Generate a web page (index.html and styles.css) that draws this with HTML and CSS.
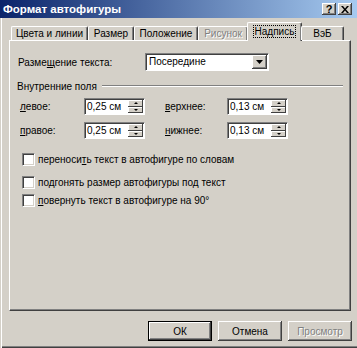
FILE: index.html
```html
<!DOCTYPE html>
<html>
<head>
    <meta charset="UTF-8">
    <title>Формат автофигуры</title>
    <link rel="stylesheet" href="styles.css">
</head>
<body>
    <div class="window">
        <div class="titlebar">
            <span class="title">Формат автофигуры</span>
            <div class="title-btns">
                <span class="tbtn">?</span>
                <span class="tbtn tbtn-close">
                    <svg width="8" height="7" viewBox="0 0 8 7"><path d="M0 0h2l2 2.5L6 0h2L5 3.5 8 7H6L4 4.5 2 7H0l3-3.5z" fill="#000"/></svg>
                </span>
            </div>
        </div>

        <div class="tabs">
            <div class="tab t1">Цвета и линии</div>
            <div class="tab t2">Размер</div>
            <div class="tab t3">Положение</div>
            <div class="tab t4 disabled">Рисунок</div>
            <div class="tab t5 active"><span class="focus">Надпись</span></div>
            <div class="tab t6">ВэБ</div>
        </div>

        <div class="panel">
            <div class="row-place">
                <span class="label-place">Разме<u>щ</u>ение текста:</span>
                <div class="select">
                    <span class="select-text">Посередине</span>
                    <span class="select-btn">
                        <svg width="7" height="4" viewBox="0 0 7 4"><path d="M0 0h7L3.5 4z" fill="#000"/></svg>
                    </span>
                </div>
            </div>

            <div class="group-title">
                <span>Внутренние поля</span>
                <span class="etched"></span>
            </div>

            <div class="margins">
                <div class="field">
                    <span class="field-label"><u>л</u>евое:</span>
                    <div class="spin"><span class="spin-text">0,25 см</span><span class="spin-btns"><span class="sb up"></span><span class="sb down"></span></span></div>
                </div>
                <div class="field">
                    <span class="field-label"><u>в</u>ерхнее:</span>
                    <div class="spin"><span class="spin-text">0,13 см</span><span class="spin-btns"><span class="sb up"></span><span class="sb down"></span></span></div>
                </div>
                <div class="field">
                    <span class="field-label"><u>п</u>равое:</span>
                    <div class="spin"><span class="spin-text">0,25 см</span><span class="spin-btns"><span class="sb up"></span><span class="sb down"></span></span></div>
                </div>
                <div class="field">
                    <span class="field-label"><u>н</u>ижнее:</span>
                    <div class="spin"><span class="spin-text">0,13 см</span><span class="spin-btns"><span class="sb up"></span><span class="sb down"></span></span></div>
                </div>
            </div>

            <div class="checks">
                <label class="check c1"><span class="box"></span><span>переноси<u>т</u>ь текст в автофигуре по словам</span></label>
                <label class="check c2"><span class="box"></span><span>подгонять размер автофигуры под текст</span></label>
                <label class="check c3"><span class="box"></span><span><u>п</u>овернуть текст в автофигуре на 90°</span></label>
            </div>
        </div>

        <div class="buttons">
            <button class="btn default">ОК</button>
            <button class="btn">Отмена</button>
            <button class="btn disabled">Просмотр</button>
        </div>
    </div>
</body>
</html>
```

FILE: styles.css
```css
* {
    margin: 0;
    padding: 0;
    box-sizing: border-box;
}

body {
    background-color: #d4d0c8;
    font-family: 'Liberation Sans', Arial, sans-serif;
    font-size: 10px;
    color: #000;
}

.window {
    width: 357px;
    height: 348px;
    background-color: #d4d0c8;
    box-shadow: inset 1px 0 #d4d0c8, inset 2px 0 #ffffff, inset 0 -1px #404040, inset 0 -2px #808080;
    overflow: hidden;
}

/* Заголовок окна */
.titlebar {
    height: 18px;
    display: flex;
    align-items: center;
    justify-content: space-between;
    padding: 0 5px 0 3px;
    background: linear-gradient(to right, #0a246a, #a6caf0);
}

.title {
    color: #ffffff;
    font-weight: bold;
    font-size: 11.5px;
}

.title-btns {
    display: flex;
    gap: 2px;
}

.tbtn {
    width: 14px;
    height: 12px;
    background: #d4d0c8;
    display: flex;
    align-items: center;
    justify-content: center;
    font-weight: bold;
    font-size: 11px;
    line-height: 1;
    box-shadow: inset -1px -1px #404040, inset 1px 1px #ffffff, inset -2px -2px #808080;
}

/* Вкладки */
.tabs {
    display: flex;
    align-items: flex-end;
    height: 22px;
    padding-left: 11px;
    position: relative;
    z-index: 1;
}

.tab {
    height: 14px;
    display: flex;
    align-items: center;
    justify-content: center;
    background: #d4d0c8;
    border-top: 1px solid #ffffff;
    border-left: 1px solid #ffffff;
    border-right: 1px solid #404040;
    box-shadow: inset -1px 0 #808080;
    border-top-left-radius: 2px;
    border-top-right-radius: 2px;
}

.t1 { width: 77px; }
.t2 { width: 46px; }
.t3 { width: 64px; }
.t4 { width: 50px; }
.t5 { width: 55px; }
.t6 { width: 43px; }

.tab.disabled {
    color: #808080;
    text-shadow: 1px 1px #ffffff;
}

.tab.active {
    height: 19px;
    margin: 0 -1px -1px -1px;
    padding-bottom: 2px;
}

.focus {
    outline: 1px dotted #000;
    padding: 0 1px;
}

/* Панель */
.panel {
    margin-left: 9px;
    width: 342px;
    height: 271px;
    padding: 12px 7px 0 8px;
    border-top: 1px solid #ffffff;
    border-left: 1px solid #ffffff;
    border-right: 1px solid #404040;
    border-bottom: 1px solid #404040;
    box-shadow: inset -1px -1px #808080;
}

.row-place {
    display: flex;
    align-items: center;
    height: 18px;
}

.label-place {
    width: 127px;
}

.select {
    width: 124px;
    height: 18px;
    display: flex;
    background: #ffffff;
    border-top: 1px solid #808080;
    border-left: 1px solid #808080;
    border-right: 1px solid #ffffff;
    border-bottom: 1px solid #ffffff;
    box-shadow: inset 1px 1px #404040;
}

.select-text {
    flex: 1;
    padding: 2px 0 0 3px;
}

.select-btn {
    width: 15px;
    margin: 1px 1px 1px 0;
    background: #d4d0c8;
    display: flex;
    align-items: center;
    justify-content: center;
    box-shadow: inset -1px -1px #404040, inset 1px 1px #ffffff, inset -2px -2px #808080;
}

.group-title {
    display: flex;
    align-items: center;
    gap: 5px;
    margin: 9px 0 0 -1px;
    height: 12px;
}

.etched {
    flex: 1;
    height: 2px;
    border-top: 1px solid #808080;
    border-bottom: 1px solid #ffffff;
}

.margins {
    display: grid;
    grid-template-columns: 145px 140px;
    row-gap: 7px;
    margin: 6px 0 0 2px;
}

.field {
    display: flex;
    align-items: center;
}

.field-label {
    width: 64px;
}

.field:nth-child(even) .field-label {
    width: 62px;
}

.spin {
    width: 61px;
    height: 17px;
    display: flex;
    background: #ffffff;
    border-top: 1px solid #808080;
    border-left: 1px solid #808080;
    border-right: 1px solid #ffffff;
    border-bottom: 1px solid #ffffff;
    box-shadow: inset 1px 1px #404040;
}

.spin-text {
    flex: 1;
    padding: 2px 0 0 2px;
}

.spin-btns {
    width: 15px;
    margin: 1px 1px 1px 0;
    display: flex;
    flex-direction: column;
}

.sb {
    flex: 1;
    background: #d4d0c8;
    box-shadow: inset -1px -1px #404040, inset 1px 1px #ffffff;
    display: flex;
    align-items: center;
    justify-content: center;
}

.sb::after {
    content: '';
    width: 0;
    height: 0;
    border-left: 2px solid transparent;
    border-right: 2px solid transparent;
}

.sb.up::after {
    border-bottom: 2px solid #000;
}

.sb.down::after {
    border-top: 2px solid #000;
}

/* Флажки */
.checks {
    margin: 14px 0 0 4px;
    display: flex;
    flex-direction: column;
}

.check {
    display: flex;
    align-items: center;
    gap: 3px;
    height: 13px;
}

.c2 { margin-top: 10px; }
.c3 { margin-top: 5px; }

.box {
    width: 13px;
    height: 13px;
    background: #ffffff;
    border-top: 1px solid #808080;
    border-left: 1px solid #808080;
    border-right: 1px solid #ffffff;
    border-bottom: 1px solid #ffffff;
    box-shadow: inset 1px 1px #404040, inset -1px -1px #d4d0c8;
}

/* Кнопки */
.buttons {
    display: flex;
    justify-content: flex-end;
    gap: 6px;
    padding: 10px 5px 0 0;
}

.btn {
    width: 64px;
    height: 20px;
    font-family: 'Liberation Sans', Arial, sans-serif;
    font-size: 10px;
    background: #d4d0c8;
    border: none;
    box-shadow: inset -1px -1px #404040, inset 1px 1px #ffffff, inset -2px -2px #808080;
}

.btn.default {
    border: 1px solid #000;
}

.btn.disabled {
    color: #808080;
    text-shadow: 1px 1px #ffffff;
}
```
